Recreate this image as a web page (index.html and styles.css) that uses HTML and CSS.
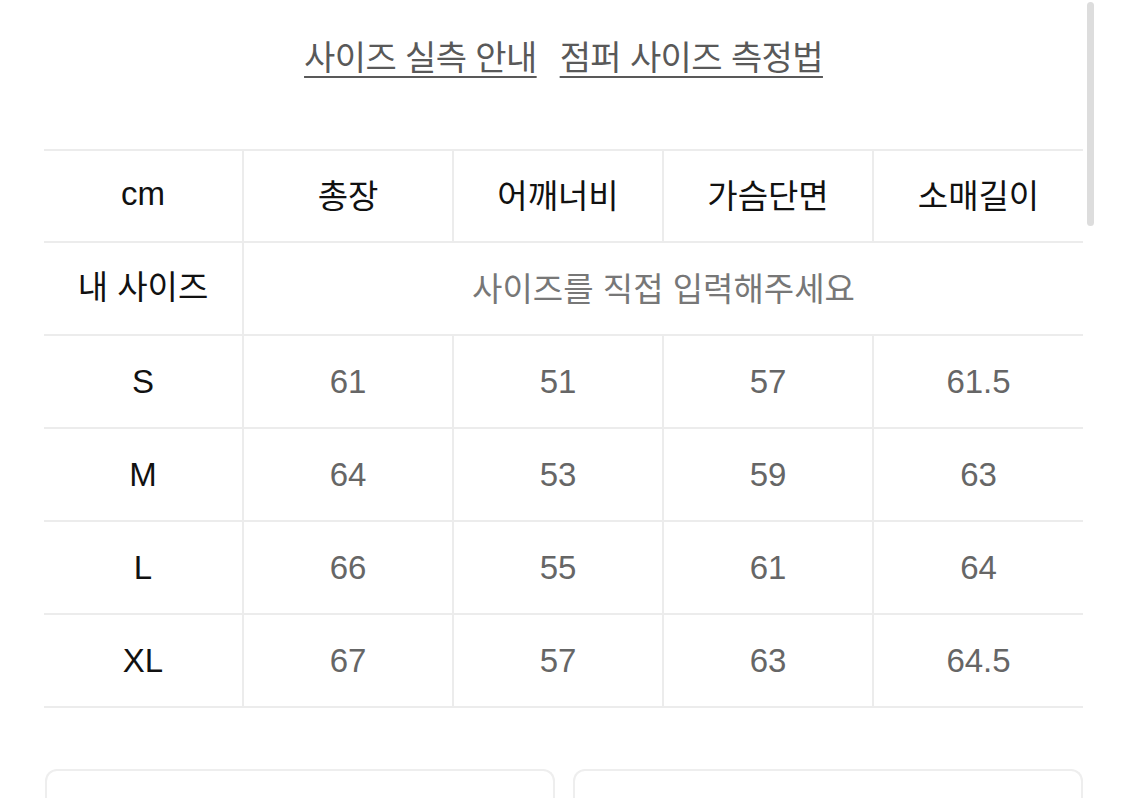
FILE: index.html
```html
<!DOCTYPE html>
<html lang="ko">
<head>
<meta charset="utf-8">
<link rel="stylesheet" href="styles.css">
</head>
<body>
<div class="page">
  <div class="links">
    <a class="link">사이즈 실측 안내</a>
    <a class="link">점퍼 사이즈 측정법</a>
  </div>
  <table class="size-table">
    <colgroup>
      <col class="c-first"><col class="c"><col class="c"><col class="c"><col class="c">
    </colgroup>
    <tr class="head">
      <th>cm</th><th>총장</th><th>어깨너비</th><th>가슴단면</th><th>소매길이</th>
    </tr>
    <tr class="mine">
      <th>내 사이즈</th><td colspan="4" class="hint">사이즈를 직접 입력해주세요</td>
    </tr>
    <tr><th>S</th><td>61</td><td>51</td><td>57</td><td>61.5</td></tr>
    <tr><th>M</th><td>64</td><td>53</td><td>59</td><td>63</td></tr>
    <tr><th>L</th><td>66</td><td>55</td><td>61</td><td>64</td></tr>
    <tr><th>XL</th><td>67</td><td>57</td><td>63</td><td>64.5</td></tr>
  </table>
  <div class="cards">
    <div class="card"></div>
    <div class="card"></div>
  </div>
</div>
<div class="scrollbar"></div>
</body>
</html>
```
FILE: styles.css
```css
html, body {
  margin: 0;
  padding: 0;
  background: #fff;
  overflow: hidden;
}
body {
  font-family: "Liberation Sans", "Noto Sans CJK KR", sans-serif;
  width: 1125px;
  height: 798px;
}
.page {
  padding: 0 42px 0 44px;
}
.links {
  display: flex;
  justify-content: center;
  gap: 23px;
  padding-top: 33px;
  height: 149px;
  box-sizing: border-box;
}
.link {
  font-family: "Noto Sans CJK KR", sans-serif;
  font-size: 34px;
  line-height: 46px;
  height: 46px;
  color: #595959;
  text-decoration: underline;
  text-decoration-thickness: 2px;
  text-underline-offset: 6px;
  letter-spacing: -0.6px;
}
.size-table {
  width: 1039px;
  border-collapse: collapse;
  table-layout: fixed;
}
.c-first { width: 199px; }
.c { width: 210px; }
.size-table th, .size-table td {
  height: 91px;
  padding: 0;
  line-height: 40px;
  text-align: center;
  vertical-align: middle;
  border: 2px solid #ececec;
  font-size: 33px;
}
.size-table tr > :first-child { border-left: none; }
.size-table tr > :last-child { border-right: none; }
.size-table th {
  font-weight: 400;
  color: #111;
  font-size: 33px;
}
.size-table .head th {
  font-family: "Noto Sans CJK KR", sans-serif;
  height: 86px;
  padding-bottom: 4px;
}
.size-table .head th:first-child {
  font-family: "Liberation Sans", sans-serif;
}
.size-table .mine th {
  height: 89px;
  padding-bottom: 2px;
}
.size-table td {
  color: #666;
}
.size-table td.hint {
  font-family: "Noto Sans CJK KR", sans-serif;
  color: #777;
  height: 87px;
  padding-bottom: 4px;
}
.cards {
  display: flex;
  gap: 18px;
  margin-top: 61px;
  padding-left: 1px;
}
.card {
  flex: 1;
  height: 40px;
  border: 2px solid #eeeeee;
  border-bottom: none;
  border-radius: 12px 12px 0 0;
}
.scrollbar {
  position: fixed;
  left: 1087px;
  top: 2px;
  width: 7px;
  height: 224px;
  border-radius: 4px;
  background: #dddddd;
}
```
